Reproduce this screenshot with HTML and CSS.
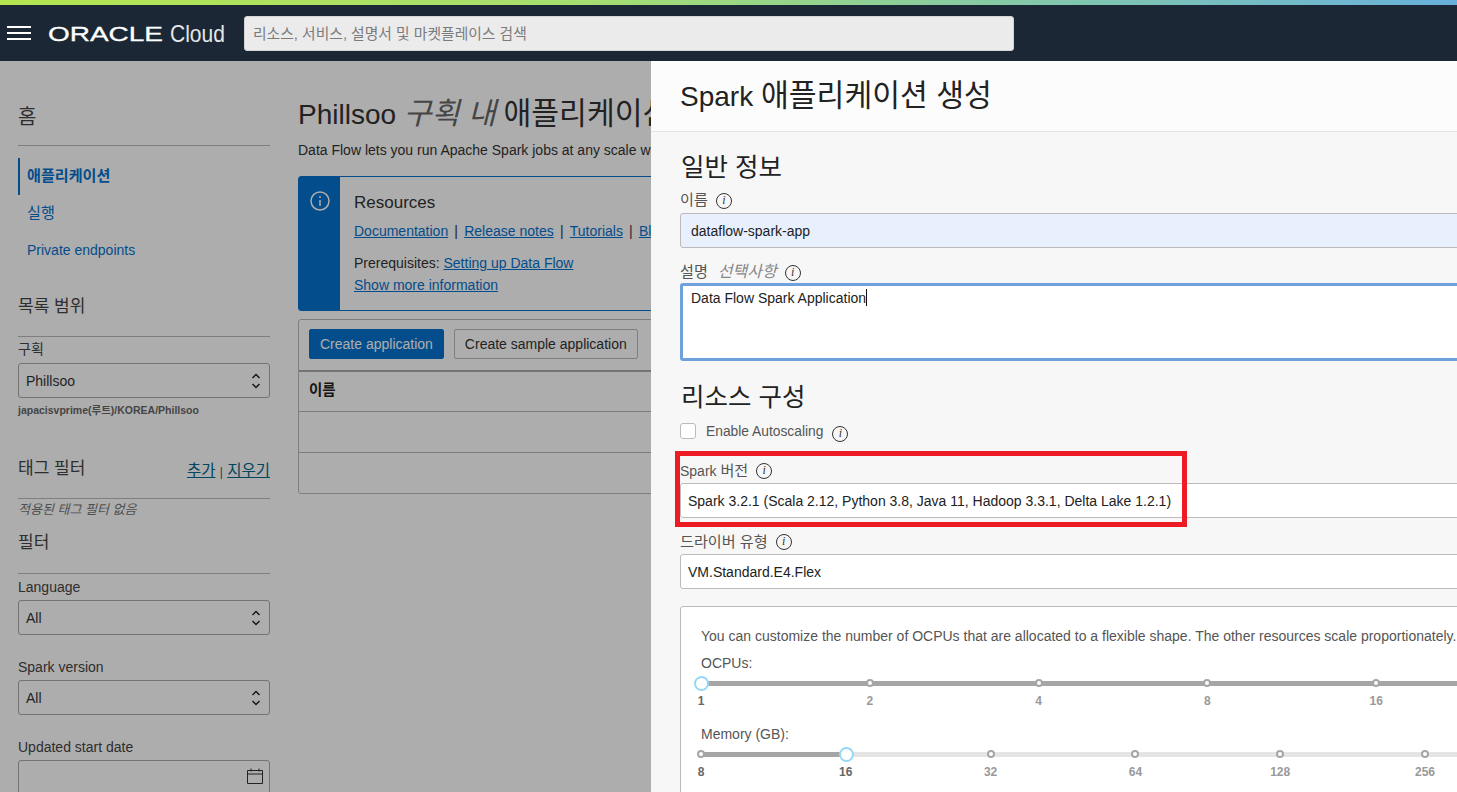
FILE: index.html
```html
<!DOCTYPE html>
<html lang="ko">
<head>
    <meta charset="UTF-8">
    <meta name="viewport" content="width=device-width, initial-scale=1.0">
    <title>Spark 애플리케이션 생성</title>

    <link rel="stylesheet" href="styles.css">
</head>
<body>
    <div class="faixa"></div>
    <header class="topo">
        <div class="menu"><span></span><span></span><span></span></div>
        <svg class="logo" width="190" height="30" viewBox="0 0 190 30">
            <text x="0" y="23" class="logo-oracle" textLength="115" lengthAdjust="spacingAndGlyphs">ORACLE</text>
            <text x="122" y="24" class="logo-cloud" textLength="55" lengthAdjust="spacingAndGlyphs">Cloud</text>
        </svg>
        <div class="busca">리소스, 서비스, 설명서 및 마켓플레이스 검색</div>
    </header>

    <div class="pagina">
        <aside class="lateral">
            <h2 class="lat-titulo home">홈</h2>
            <nav class="nav">
                <a class="nav-item ativo ko">애플리케이션</a>
                <a class="nav-item ko">실행</a>
                <a class="nav-item">Private endpoints</a>
            </nav>
            <h3 class="lat-titulo escopo">목록 범위</h3>
            <label class="lat-label">구획</label>
            <div class="sel">Phillsoo
                <svg class="setas" width="10" height="18" viewBox="0 0 10 18"><path d="M1.500 6 5 2.500 8.500 6M1.500 12 5 15.500 8.500 12"/></svg>
            </div>
            <p class="caminho">japacisvprime(루트)/KOREA/Phillsoo</p>
            <div class="tag-linha">
                <h3 class="lat-titulo">태그 필터</h3>
                <span class="tag-acoes"><a>추가</a> <small>|</small> <a>지우기</a></span>
            </div>
            <p class="sem-tag">적용된 태그 필터 없음</p>
            <h3 class="lat-titulo filtro">필터</h3>
            <label class="lat-label lang">Language</label>
            <div class="sel">All
                <svg class="setas" width="10" height="18" viewBox="0 0 10 18"><path d="M1.500 6 5 2.500 8.500 6M1.500 12 5 15.500 8.500 12"/></svg>
            </div>
            <label class="lat-label versao">Spark version</label>
            <div class="sel">All
                <svg class="setas" width="10" height="18" viewBox="0 0 10 18"><path d="M1.500 6 5 2.500 8.500 6M1.500 12 5 15.500 8.500 12"/></svg>
            </div>
            <label class="lat-label versao">Updated start date</label>
            <div class="sel">
                <svg class="calendario" width="16" height="16" viewBox="0 0 16 16"><path d="M.5 2.500h15v13H.5zM.5 6h15M4 .5v3M12 .5v3"/></svg>
            </div>
        </aside>

        <main class="conteudo">
            <h1 class="titulo">Phillsoo <em class="ko">구획 내</em> <span class="ko">애플리케이션</span></h1>
            <p class="sub">Data Flow lets you run Apache Spark jobs at any scale without deploying or managing a cluster.</p>
            <section class="aviso">
                <div class="aviso-faixa">
                    <svg width="20" height="20" viewBox="0 0 20 20"><circle cx="10" cy="10" r="9"/><path d="M10 5v2M10 9v6"/></svg>
                </div>
                <div class="aviso-texto">
                    <h3>Resources</h3>
                    <p class="links"><a>Documentation</a><span class="sep">|</span><a>Release notes</a><span class="sep">|</span><a>Tutorials</a><span class="sep">|</span><a>Blogs</a></p>
                    <p class="pre">Prerequisites: <a>Setting up Data Flow</a></p>
                    <p class="mais"><a>Show more information</a></p>
                </div>
            </section>
            <section class="tabela">
                <div class="barra">
                    <button class="btn primario">Create application</button>
                    <button class="btn">Create sample application</button>
                </div>
                <div class="linha cabeca">이름</div>
                <div class="linha"></div>
                <div class="linha"></div>
            </section>
        </main>
    </div>

    <div class="escuro"></div>

    <section class="painel">
        <div class="painel-topo">
            <h1>Spark <span class="ko">애플리케이션 생성</span></h1>
        </div>
        <div class="painel-corpo">
            <h2 class="secao">일반 정보</h2>
            <label class="campo-label"><span class="ko">이름</span> <i class="dica">i</i></label>
            <div class="entrada preenchida">dataflow-spark-app</div>
            <label class="campo-label desc"><span class="ko">설명</span> <em>선택사항</em> <i class="dica">i</i></label>
            <div class="area">Data Flow Spark Application<span class="cursor"></span></div>

            <h2 class="secao recursos">리소스 구성</h2>
            <div class="check-linha">
                <span class="check"></span>
                <span>Enable Autoscaling</span>
                <i class="dica">i</i>
            </div>
            <label class="campo-label spark"><span>Spark <span class="ko">버전</span></span> <i class="dica">i</i></label>
            <div class="entrada opcao">Spark 3.2.1 (Scala 2.12, Python 3.8, Java 11, Hadoop 3.3.1, Delta Lake 1.2.1)</div>
            <label class="campo-label driver"><span class="ko">드라이버 유형</span> <i class="dica">i</i></label>
            <div class="entrada opcao">VM.Standard.E4.Flex</div>

            <div class="cartao">
                <p class="cartao-texto">You can customize the number of OCPUs that are allocated to a flexible shape. The other resources scale proportionately.</p>
                <div class="cartao-label">OCPUs:</div>
                <div class="slider ocpu">
                    <div class="trilho cheio"></div>
                    <span class="marca atual"><b class="ponto"></b><b class="num">1</b></span>
                    <span class="marca"><b class="ponto"></b><b class="num">2</b></span>
                    <span class="marca"><b class="ponto"></b><b class="num">4</b></span>
                    <span class="marca"><b class="ponto"></b><b class="num">8</b></span>
                    <span class="marca"><b class="ponto"></b><b class="num">16</b></span>
                </div>
                <div class="cartao-label mem">Memory (GB):</div>
                <div class="slider memoria">
                    <div class="trilho"></div>
                    <div class="trilho cheio parcial"></div>
                    <span class="marca"><b class="ponto"></b><b class="num passou">8</b></span>
                    <span class="marca atual"><b class="ponto"></b><b class="num">16</b></span>
                    <span class="marca"><b class="ponto"></b><b class="num">32</b></span>
                    <span class="marca"><b class="ponto"></b><b class="num">64</b></span>
                    <span class="marca"><b class="ponto"></b><b class="num">128</b></span>
                    <span class="marca"><b class="ponto"></b><b class="num">256</b></span>
                </div>
            </div>
        </div>
    </section>

    <div class="destaque"></div>
</body>
</html>
```

FILE: styles.css
```css
*{
    box-sizing: border-box;
}
html, body{
    margin: 0;
    height: 792px;
    overflow: hidden;
}
body{
    position: relative;
    background-color: #fff;
    color: #333;
    font-family: "Liberation Sans", "Noto Sans CJK KR", sans-serif;
    font-size: 14px;
}
h1, h2, h3, p{
    margin: 0;
    font-weight: normal;
}
a{
    color: #0572ce;
}
/* o hangul da fonte instalada e mais estreito que o da captura */
.ko{
    font-size: 1.08em;
}

/* topo */
.faixa{
    height: 5px;
    background: linear-gradient(90deg, #b4e550 0%, #a6de70 40%, #84c9a8 70%, #68b0dc 100%);
}
.topo{
    position: relative;
    z-index: 3;
    height: 56px;
    background-color: #1b2735;
    display: flex;
    align-items: center;
    padding-left: 7px;
}
.menu{
    width: 24px;
    display: flex;
    flex-direction: column;
    gap: 4px;
}
.menu span{
    height: 2px;
    background-color: #fff;
}
.logo{
    margin-left: 17px;
    margin-right: -10px;
}
.logo-oracle{
    fill: #fff;
    font-size: 21px;
    stroke: #fff;
    stroke-width: .3px;
}
.logo-cloud{
    fill: #e4e6e8;
    font-size: 24px;
}
.busca{
    width: 770px;
    height: 35px;
    margin-left: 16px;
    padding-left: 8px;
    line-height: 34px;
    background-color: #ebebeb;
    border: 1px solid #d4d4d4;
    border-radius: 3px;
    color: #7b7b7b;
    font-size: 14.800px;
}

/* pagina atras do painel */
.pagina{
    display: flex;
    padding-left: 18px;
}
.lateral{
    width: 252px;
    flex-shrink: 0;
}
.lat-titulo{
    font-size: 17px;
    line-height: 22px;
    color: #444;
}
.home{
    margin-top: 45px;
    height: 40px;
    font-size: 20px;
    border-bottom: 1px solid #bbb;
}
.nav{
    margin-top: 12px;
}
.nav-item{
    display: block;
    height: 37px;
    line-height: 36px;
    padding-left: 9px;
}
.nav-item.ativo{
    border-left: 2px solid #0572ce;
    padding-left: 7px;
    font-weight: bold;
}
.escopo{
    margin-top: 25px;
    padding-top: 2px;
    height: 43px;
    border-bottom: 1px solid #bbb;
}
.lat-label{
    display: block;
    height: 26px;
    line-height: 24px;
    color: #444;
}
.sel{
    position: relative;
    height: 35px;
    padding-left: 7px;
    line-height: 34px;
    border: 1px solid #aaa;
    border-radius: 3px;
    background-color: #fff;
}
.setas{
    position: absolute;
    right: 8px;
    top: 8px;
    fill: none;
    stroke: #222;
    stroke-width: 1.500px;
}
.calendario{
    position: absolute;
    right: 6px;
    top: 7px;
    fill: none;
    stroke: #333;
}
.caminho{
    margin-top: 6px;
    font-size: 10.500px;
    line-height: 12px;
    color: #666;
    font-weight: bold;
}
.tag-linha{
    display: flex;
    justify-content: space-between;
    align-items: flex-end;
    margin-top: 42px;
    height: 41px;
    padding-bottom: 8px;
    border-bottom: 1px solid #bbb;
}
.tag-linha .lat-titulo{
    margin-bottom: 10px;
}
.tag-acoes{
    margin-bottom: 8px;
    font-size: 15.500px;
    line-height: 20px;
    color: #555;
    white-space: nowrap;
}
.tag-acoes small{
    font-size: 12px;
}
.tag-acoes a{
    color: #00688c;
    text-decoration: underline;
}
.sem-tag{
    margin-top: 4px;
    font-size: 13px;
    font-style: italic;
    line-height: 14px;
    color: #777;
}
.filtro{
    margin-top: 13px;
    padding-top: 2px;
    height: 44px;
    border-bottom: 1px solid #bbb;
}
.lang{
    line-height: 26px;
}
.versao{
    margin-top: 20px;
    height: 25px;
}

.conteudo{
    width: 353px;
    margin-left: 28px;
    overflow: hidden;
    height: 731px;
}
.titulo{
    margin-top: 33px;
    font-size: 28px;
    line-height: 40px;
    color: #333;
    white-space: nowrap;
}
.titulo em{
    color: #666;
}
.sub{
    margin-top: 5px;
    line-height: 20px;
    white-space: nowrap;
}
.aviso{
    display: flex;
    width: 800px;
    margin-top: 16px;
    height: 135px;
    border: 1px solid #0572ce;
    border-radius: 3px;
}
.aviso-faixa{
    width: 41px;
    background-color: #0572ce;
    padding: 14px 0 0 11px;
}
.aviso-faixa svg{
    fill: none;
    stroke: #fff;
    stroke-width: 1.500px;
}
.aviso-texto{
    padding: 16px 0 0 14px;
    white-space: nowrap;
}
.aviso-texto h3{
    font-size: 17px;
    line-height: 20px;
}
.aviso-texto a{
    text-decoration: underline;
}
.links{
    margin-top: 8px;
    line-height: 20px;
}
.sep{
    margin: 0 6.200px;
}
.pre{
    margin-top: 12px;
    line-height: 20px;
}
.mais{
    margin-top: 2px;
    line-height: 20px;
}
.tabela{
    width: 800px;
    margin-top: 8px;
    border: 1px solid #bbb;
    border-radius: 3px;
}
.barra{
    display: flex;
    gap: 10px;
    padding: 9px 10px;
    height: 50px;
}
.btn{
    height: 30px;
    padding: 0 10px;
    border: 1px solid #bbb;
    border-radius: 2px;
    background-color: #fff;
    color: #333;
    font-family: inherit;
    font-size: 14px;
}
.primario{
    background-color: #0572ce;
    border-color: #0572ce;
    color: #fff;
}
.linha{
    height: 41px;
    border-top: 1px solid #bbb;
    padding-left: 10px;
    line-height: 36px;
}
.cabeca{
    border-top: 2px solid #aaa;
    font-size: 14.500px;
    font-weight: bold;
    color: #222;
}

.escuro{
    position: absolute;
    left: 0;
    right: 0;
    top: 61px;
    bottom: 0;
    z-index: 1;
    background-color: rgba(0, 0, 0, .32);
}

/* painel */
.painel{
    position: absolute;
    left: 651px;
    right: 0;
    top: 61px;
    bottom: 0;
    z-index: 2;
    overflow: hidden;
    background-color: #f7f7f7;
    color: #333;
}
.painel-topo{
    height: 71px;
    padding: 16px 0 0 29px;
    background-color: #fcfcfc;
    border-bottom: 1px solid #e4e4e4;
}
.painel-topo h1{
    font-size: 28px;
    line-height: 38px;
    color: #222;
}
.painel-corpo{
    width: 1000px;
    padding-left: 29px;
}
.secao{
    margin-top: 18px;
    padding-left: 1px;
    font-size: 25.500px;
    line-height: 34px;
    color: #222;
}
.campo-label{
    display: flex;
    align-items: center;
    gap: 5px;
    height: 20px;
    margin-top: 5px;
    padding-bottom: 2px;
    font-size: 14px;
    color: #555;
}
.campo-label em{
    color: #888;
    font-size: 16px;
    margin-left: 5px;
}
.dica{
    display: inline-block;
    width: 16px;
    height: 16px;
    margin-left: 3px;
    margin-top: 5px;
    border: 1.200px solid #333;
    border-radius: 50%;
    font-family: "Liberation Serif", serif;
    font-size: 12px;
    line-height: 13px;
    text-align: center;
    color: #333;
}
.entrada{
    height: 35px;
    margin-top: 4px;
    line-height: 35px;
    border: 1px solid #bbb;
    border-radius: 3px;
    background-color: #fff;
    font-size: 14px;
    color: #222;
}
.preenchida{
    padding-left: 10px;
    background-color: #e8f0fe;
}
.opcao{
    padding-left: 7px;
}
.desc{
    margin-top: 13px;
}
.area{
    height: 78px;
    margin-top: 2px;
    padding: 3px 0 0 8px;
    line-height: 18px;
    background-color: #fff;
    border: 3px solid #6fa2dc;
    border-radius: 3px;
    color: #222;
}
.cursor{
    display: inline-block;
    width: 1px;
    height: 17px;
    background-color: #111;
    vertical-align: top;
}
.recursos{
    margin-top: 19px;
}
.check-linha{
    display: flex;
    align-items: center;
    height: 20px;
    margin-top: 7px;
    font-size: 13.800px;
    color: #555;
}
.check{
    width: 16px;
    height: 16px;
    margin-right: 10px;
    background-color: #fff;
    border: 1px solid #bbb;
    border-radius: 3px;
}
.check-linha .dica{
    margin-left: 9px;
}
.spark{
    height: 19px;
    margin-top: 19px;
}
.driver{
    height: 19px;
    margin-top: 13px;
}
.cartao{
    height: 300px;
    margin-top: 17px;
    padding: 19px 0 0 20px;
    background-color: #fff;
    border: 1px solid #bbb;
    border-radius: 3px;
}
.cartao-texto{
    line-height: 20px;
    color: #555;
    white-space: nowrap;
}
.cartao-label{
    margin-top: 7px;
    line-height: 20px;
    color: #555;
}
.mem{
    margin-top: 19px;
}
.slider{
    position: relative;
    display: flex;
    height: 32px;
}
.trilho{
    position: absolute;
    left: 0;
    top: 8px;
    width: 100%;
    height: 5px;
    background-color: #e5e5e5;
}
.cheio{
    background-color: #a6a6a6;
}
.parcial{
    width: 145px;
}
.marca{
    position: relative;
    flex-shrink: 0;
    height: 100%;
}
.ocpu .marca{
    width: 168.800px;
}
.memoria .marca{
    width: 144.800px;
}
.ponto{
    position: absolute;
    left: -4px;
    top: 6px;
    width: 8px;
    height: 8px;
    border: 2px solid #a6a6a6;
    border-radius: 50%;
    background-color: #fff;
}
.atual .ponto{
    left: -7px;
    top: 3px;
    width: 15px;
    height: 15px;
    border: 2.500px solid #94d8f8;
}
.num{
    position: absolute;
    left: -20px;
    width: 40px;
    top: 21px;
    text-align: center;
    font-size: 12px;
    line-height: 14px;
    color: #999;
}
.atual .num, .passou{
    color: #666;
}

/* anotacao vermelha */
.destaque{
    position: absolute;
    left: 675px;
    top: 451px;
    width: 512px;
    height: 76px;
    z-index: 4;
    border: 5px solid #ed1c24;
}
```
